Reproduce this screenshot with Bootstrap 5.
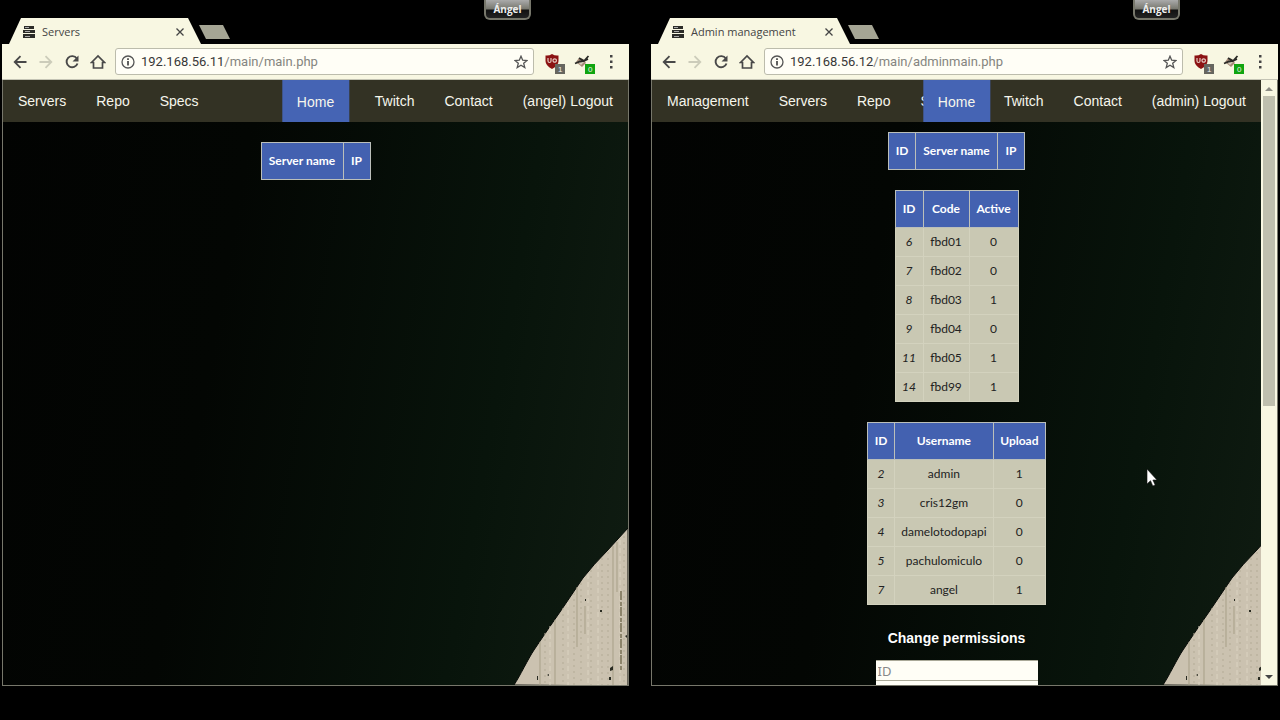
<!DOCTYPE html>
<html lang="en">
<head>
<meta charset="utf-8">
<meta name="viewport" content="width=device-width, initial-scale=1">
<title>Servers</title>
<link href="https://cdn.jsdelivr.net/npm/bootstrap@5.3.0/dist/css/bootstrap.min.css" rel="stylesheet">
<style>
body{background:#000;font-family:"Liberation Sans",Arial,sans-serif;font-size:14px;overflow:hidden}
.desk{height:100vh;padding:0 2px 34px;gap:22px}
.win{flex:1 1 0;min-width:0}
.strip{height:44px;flex-shrink:0}
.tab-shape{width:192px;height:26px;margin-left:7px;padding:0 13px 0 14px;background:#f8f7e2;clip-path:polygon(12px 0,179px 0,192px 100%,0 100%)}
.tab-title{font:11px/20px "Open Sans",sans-serif;color:#444;margin-left:7px}
.tab-shape svg,.tab-title{position:relative;top:1px}
.plain{border:0;background:none;padding:0;line-height:0}
.new-tab{width:31px;height:14px;margin:0 0 5px -2px;background:#a5a594;clip-path:polygon(0 0,24px 0,31px 100%,7px 100%);border:0;padding:0}
.user-btn{width:47px;height:20px;margin-right:98px;padding:0;border:2px solid #77776b;border-top:0;border-radius:0 0 6px 6px;background:linear-gradient(#aaa 0,#77776e 9px,#111 10px,#222 100%);color:#eee;font:bold 10px/16px "Open Sans",sans-serif}
.tools{height:36px;flex-shrink:0;background:#f8f7e2;padding:0 14px 0 10px;border-bottom:1px solid #c4c4b4}
.tools .plain{width:16px;margin-right:10px}
.address{height:27px;border:1px solid #bcbcac;border-radius:3px;background:#fffef6;padding:0 5px;margin-left:-1px;margin-right:10px}
.url{font:13px/20px Roboto,sans-serif;color:#858580;margin-left:6px}
.url b{font-weight:400;color:#383838}
.tools .ext{width:22px;margin:4px 8px 0 0}
.tools .dots{width:8px;margin:0 0 0 3px}
.pane{border:1px solid #77776b;border-top:0;min-height:0;flex:1 1 0;background:linear-gradient(100deg,#020302 0%,#030603 35%,#08140b 75%,#101c12 100%)}
.hill{right:0;bottom:0}
.site{z-index:1}
.menu{height:42px;background:#333224}
.menu a{color:#f6f6ec;text-decoration:none;padding:0 15px;line-height:42px;white-space:nowrap}
.menu a.tucked{width:0}
.menu a.home{left:50%;top:0;transform:translateX(-50%);background:#4564b4;line-height:44px;height:42px}
.body-l{padding-top:20px}
.body-r{padding-top:10px}
.grid{border-collapse:collapse;table-layout:fixed;background:#c9c8b3;border:1px solid #c3c3ae;font:12px/18px Lato,sans-serif;color:#222;text-align:center;margin:0 auto 20px}
.grid th{background:#4361b0;color:#fff;height:37px;padding:0;border:1px solid #bbbfba;font-weight:700}
.grid td{height:29px;padding:0;border:1px solid #d3d2be}
.grid td:first-child{font-style:italic}
.c27{width:27px}.c28{width:28px}.c46{width:46px}.c49{width:49px}.c52{width:52px}.c82{width:82px}.c98{width:98px}
.w109{width:110px}.w136{width:137px}.w123{width:124px}.w178{width:179px}
.perm{font-size:14px;line-height:20px;font-weight:700;color:#fff;margin:23px 0 12px}
.field{display:block;width:162px;height:20px;margin:0 auto;border:solid #aaa998;border-width:1px 0 0;background:#fffef6;padding:0 2px;font:13px/18px "Noto Sans",sans-serif;border-radius:0}
.field::placeholder{color:#888}
.bar{width:16px;background:#f8f7e2;z-index:1}
.thumb{width:12px;height:52%;background:#bfbfae}
.pointer{left:1146px;top:468px;z-index:3}
</style>
</head>
<body>
<svg width="0" height="0" class="position-absolute" aria-hidden="true">
<defs>
<symbol id="rack" viewBox="0 0 12 12"><path fill="#2c2c28" d="M1 0h10v3H1zM0 4h12v3H0zM0 8h12v4H0z"/><path stroke="#aaa" d="M2 1.5h4M2 5.5h5M2 10.5h5"/></symbol>
<symbol id="cross" viewBox="0 0 8 8"><path stroke="#444" stroke-width="1.3" d="M.5.5l7 7m0-7l-7 7"/></symbol>
<symbol id="back" viewBox="0 0 16 16"><path fill="none" stroke="currentColor" stroke-width="1.8" d="M14.5 8H3M8.5 2.200L2.700 8l5.800 5.800"/></symbol>
<symbol id="forward" viewBox="0 0 16 16"><path fill="none" stroke="currentColor" stroke-width="1.8" d="M1.5 8H13M7.500 2.200L13.300 8l-5.800 5.800"/></symbol>
<symbol id="load" viewBox="0 0 16 16"><path fill="none" stroke="#484848" stroke-width="1.900" d="M12.800 4.500A5.600 5.600 0 1 0 13.500 9.500"/><path fill="#484848" d="M14.500 1.500v6H8.500z"/></symbol>
<symbol id="house" viewBox="0 0 16 16"><path fill="none" stroke="#484848" stroke-width="1.700" d="M1.500 8.500L8 2l6.500 6.500H12.500V14h-9V8.500z"/></symbol>
<symbol id="info" viewBox="0 0 14 14"><circle cx="7" cy="7" r="6" fill="none" stroke="#555" stroke-width="1.300"/><path stroke="#444" stroke-width="1.700" d="M7 6v4.500M7 3.300V5"/></symbol>
<symbol id="star" viewBox="0 0 14 14"><path fill="none" stroke="#555" stroke-width="1.300" d="M7 1.200l1.700 4 4.300.3-3.300 2.800 1.100 4.200L7 10.200l-3.800 2.300 1.100-4.200L1 5.500l4.300-.3z"/></symbol>
<symbol id="shield" viewBox="0 0 22 22"><path fill="#8b1212" d="M8 1q3 2 6.500 1.500V8q0 4.500-6.500 8-6.500-3.500-6.500-8V2.500Q5 3 8 1z"/><path fill="none" stroke="#e4c8c0" stroke-width="1.200" d="M4 5v3q0 1.500 1.500 1.500T7 8V5m2 2.500a1.700 1.700 0 1 0 3.400 0 1.700 1.700 0 1 0-3.400 0"/><rect x="11" y="11" width="10" height="10" fill="#66665f"/></symbol>
<symbol id="bird" viewBox="0 0 22 22"><path fill="#a58a78" d="M2 9l6 5 4-4-3-4-4-1z"/><path fill="#d8cfc0" d="M4 9l3 3 3-3-2-2z"/><path fill="none" stroke="#2a2a26" stroke-width="1.800" d="M1 10.500l5-2 4-.5L14.500 3M5 5l5 3 4-2"/><rect x="11" y="11" width="10" height="10" fill="#10a510"/></symbol>
<symbol id="dots" viewBox="0 0 8 16"><path fill="#444" d="M3 1h2.500v2.500H3zM3 6.500h2.500V9H3zM3 12h2.500v2.500H3z"/></symbol>
<symbol id="hill" viewBox="0 0 114 157">
<path fill="#cbc2b0" stroke="#080b08" stroke-width="1" d="M0 157C6 148 14 131 20 122Q34 101 46 84L69 50Q80 36 93 23L114 0V158z"/>
<path fill="none" stroke="#a79f87" d="M26 114v43M41 92v65M63 59v60M71 78v28M99 18v139M103 14v50"/>
<path fill="none" stroke="#b3ab96" stroke-dasharray="2 4" d="M31 105v52M49 80v77M60 65v92M67 55v102M77 42v115M88 30v127M94 24v133M110 8v149"/>
<path fill="none" stroke="#dbd3c1" stroke-dasharray="5 3" d="M36 98v59M54 74v83M74 46v111M84 36v121M106 12v145"/>
<path fill="none" stroke="#8c846b" stroke-width="2" stroke-dasharray="9 2 4 1" d="M107 63v80"/>
<path fill="#292b22" d="M96 140l3-2v4l-3 1zM95 149h2v3h-2zM111 108l2-1v3zM33 147l2-1v2zM86 82h2v2h-2zM71 71h1v2h-1zM23 148h1v4h-1z"/>
</symbol>
</defs>
</svg>

<main class="desk d-flex">
<section class="win d-flex flex-column" aria-label="Servers">
 <div class="strip d-flex align-items-end">
  <div class="tab-shape d-flex align-items-center"><svg width="12" height="12"><use href="#rack"/></svg><span class="tab-title">Servers</span><button class="plain ms-auto me-1" aria-label="Close tab"><svg width="8" height="8"><use href="#cross"/></svg></button></div>
  <button class="new-tab" aria-label="New tab"></button>
  <button class="user-btn ms-auto align-self-start">Ángel</button>
 </div>
 <div class="tools d-flex align-items-center">
  <button class="plain" aria-label="Back"><svg width="16" height="16" color="#484848"><use href="#back"/></svg></button>
  <button class="plain" aria-label="Forward"><svg width="16" height="16" color="#ccccba"><use href="#forward"/></svg></button>
  <button class="plain" aria-label="Reload"><svg width="16" height="16"><use href="#load"/></svg></button>
  <button class="plain" aria-label="Home page"><svg width="16" height="16"><use href="#house"/></svg></button>
  <div class="address d-flex align-items-center flex-grow-1"><svg width="14" height="14"><use href="#info"/></svg><span class="url"><b>192.168.56.11</b>/main/main.php</span><svg class="ms-auto" width="14" height="14"><use href="#star"/></svg></div>
  <button class="plain ext" aria-label="Blocker"><svg width="22" height="22"><use href="#shield"/><text x="14" y="19" font-size="8" fill="#eee">1</text></svg></button>
  <button class="plain ext" aria-label="Extension"><svg width="22" height="22"><use href="#bird"/><text x="14" y="19" font-size="8" fill="#eee">0</text></svg></button>
  <button class="plain dots" aria-label="Menu"><svg width="8" height="16"><use href="#dots"/></svg></button>
 </div>
 <div class="pane d-flex position-relative overflow-hidden">
  <svg class="hill position-absolute" width="114" height="157"><use href="#hill"/></svg>
  <div class="site flex-grow-1 overflow-hidden">
   <nav class="menu d-flex position-relative">
    <a href="#">Servers</a><a href="#">Repo</a><a href="#">Specs</a>
    <a href="#" class="ms-auto">Twitch</a><a href="#">Contact</a><a href="#">(angel) Logout</a>
    <a href="#" class="home position-absolute">Home</a>
   </nav>
   <div class="body-l">
    <table class="grid w109"><colgroup><col class="c82"><col class="c27"></colgroup><thead><tr><th>Server name</th><th>IP</th></tr></thead></table>
   </div>
  </div>
 </div>
</section>

<section class="win d-flex flex-column" aria-label="Admin management">
 <div class="strip d-flex align-items-end">
  <div class="tab-shape d-flex align-items-center"><svg width="12" height="12"><use href="#rack"/></svg><span class="tab-title">Admin management</span><button class="plain ms-auto me-1" aria-label="Close tab"><svg width="8" height="8"><use href="#cross"/></svg></button></div>
  <button class="new-tab" aria-label="New tab"></button>
  <button class="user-btn ms-auto align-self-start">Ángel</button>
 </div>
 <div class="tools d-flex align-items-center">
  <button class="plain" aria-label="Back"><svg width="16" height="16" color="#484848"><use href="#back"/></svg></button>
  <button class="plain" aria-label="Forward"><svg width="16" height="16" color="#ccccba"><use href="#forward"/></svg></button>
  <button class="plain" aria-label="Reload"><svg width="16" height="16"><use href="#load"/></svg></button>
  <button class="plain" aria-label="Home page"><svg width="16" height="16"><use href="#house"/></svg></button>
  <div class="address d-flex align-items-center flex-grow-1"><svg width="14" height="14"><use href="#info"/></svg><span class="url"><b>192.168.56.12</b>/main/adminmain.php</span><svg class="ms-auto" width="14" height="14"><use href="#star"/></svg></div>
  <button class="plain ext" aria-label="Blocker"><svg width="22" height="22"><use href="#shield"/><text x="14" y="19" font-size="8" fill="#eee">1</text></svg></button>
  <button class="plain ext" aria-label="Extension"><svg width="22" height="22"><use href="#bird"/><text x="14" y="19" font-size="8" fill="#eee">0</text></svg></button>
  <button class="plain dots" aria-label="Menu"><svg width="8" height="16"><use href="#dots"/></svg></button>
 </div>
 <div class="pane d-flex position-relative overflow-hidden">
  <svg class="hill position-absolute" width="114" height="157"><use href="#hill"/></svg>
  <div class="site flex-grow-1 overflow-hidden">
   <nav class="menu d-flex position-relative">
    <a href="#">Management</a><a href="#">Servers</a><a href="#">Repo</a><a href="#" class="tucked">Specs</a>
    <a href="#" class="ms-auto">Twitch</a><a href="#">Contact</a><a href="#">(admin) Logout</a>
    <a href="#" class="home position-absolute">Home</a>
   </nav>
   <div class="body-r">
    <table class="grid w136"><colgroup><col class="c27"><col class="c82"><col class="c27"></colgroup><thead><tr><th>ID</th><th>Server name</th><th>IP</th></tr></thead></table>
    <table class="grid w123"><colgroup><col class="c28"><col class="c46"><col class="c49"></colgroup><thead><tr><th>ID</th><th>Code</th><th>Active</th></tr></thead>
     <tbody><tr><td>6</td><td>fbd01</td><td>0</td></tr><tr><td>7</td><td>fbd02</td><td>0</td></tr><tr><td>8</td><td>fbd03</td><td>1</td></tr><tr><td>9</td><td>fbd04</td><td>0</td></tr><tr><td>11</td><td>fbd05</td><td>1</td></tr><tr><td>14</td><td>fbd99</td><td>1</td></tr></tbody></table>
    <table class="grid w178"><colgroup><col class="c27"><col class="c98"><col class="c52"></colgroup><thead><tr><th>ID</th><th>Username</th><th>Upload</th></tr></thead>
     <tbody><tr><td>2</td><td>admin</td><td>1</td></tr><tr><td>3</td><td>cris12gm</td><td>0</td></tr><tr><td>4</td><td>damelotodopapi</td><td>0</td></tr><tr><td>5</td><td>pachulomiculo</td><td>0</td></tr><tr><td>7</td><td>angel</td><td>1</td></tr></tbody></table>
    <h2 class="perm text-center">Change permissions</h2>
    <input class="field" placeholder="ID" aria-label="ID"><input class="field" aria-label="Upload">
   </div>
  </div>
  <div class="bar d-flex flex-column align-items-center flex-shrink-0 py-1">
   <svg width="8" height="12"><path fill="#8c8c84" d="M0 7l4-4 4 4z"/></svg>
   <div class="thumb"></div>
   <svg class="mt-auto" width="8" height="12"><path fill="#444" d="M0 6h8l-4 4z"/></svg>
  </div>
 </div>
</section>
</main>
<svg class="pointer position-absolute" width="12" height="20"><path fill="#fff" stroke="#111" stroke-width=".6" d="M1 1v15l3.500-3.300 2.300 5.300 2.400-1-2.300-5H11z"/></svg>
</body>
</html>
